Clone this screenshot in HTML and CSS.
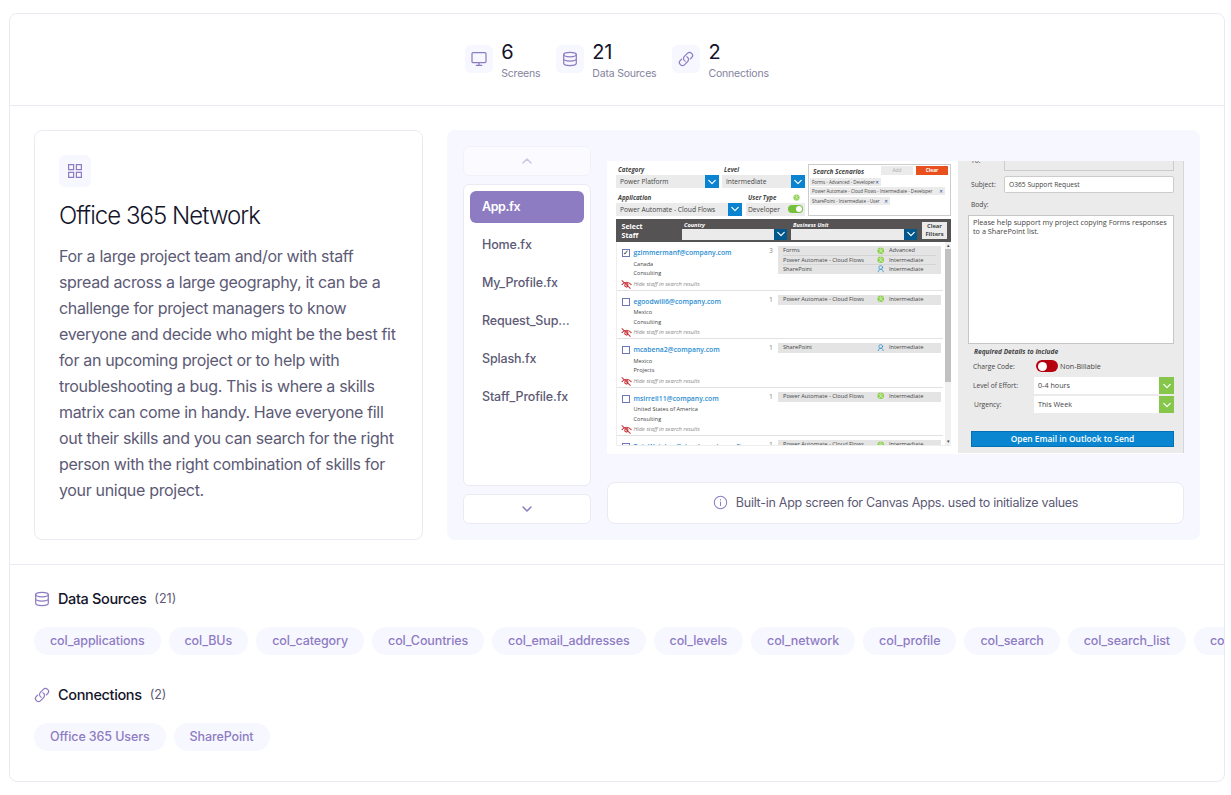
FILE: index.html
```
<!DOCTYPE html>
<html lang="en">
<head>
  <meta charset="UTF-8" />
  <meta name="viewport" content="width=device-width, initial-scale=1.0" />
  <title>Office 365 Network</title>
  <link rel="stylesheet" href="styles.css">
</head>
<body>
  <svg class="sprite" width="0" height="0">
    <symbol id="i-screen" viewBox="0 0 16 16"><rect x="1" y="1.6" width="14" height="10" rx="1.2"/><path d="M8 11.6v2.6M5.2 14.3h5.6"/></symbol>
    <symbol id="i-data" viewBox="0 0 16 16"><ellipse cx="8" cy="3.6" rx="6.3" ry="2.2"/><path d="M1.7 3.6v8.6c0 1.3 2.8 2.3 6.3 2.3s6.3-1 6.3-2.3V3.6M1.7 7.8c0 1.3 2.8 2.2 6.3 2.2s6.3-.9 6.3-2.2"/></symbol>
    <symbol id="i-link" viewBox="0 0 24 24"><path stroke-width="1.9" d="M13.19 8.688a4.5 4.5 0 0 1 1.242 7.244l-4.5 4.5a4.5 4.5 0 0 1-6.364-6.364l1.757-1.757m13.35-.622 1.757-1.757a4.5 4.5 0 0 0-6.364-6.364l-4.5 4.5a4.5 4.5 0 0 0 1.242 7.244"/></symbol>
    <symbol id="i-grid" viewBox="0 0 16 16"><path stroke-linejoin="miter" d="M1.6 1.6h5v5h-5zM9.4 1.6h5v5h-5zM1.6 9.4h5v5h-5zM9.4 9.4h5v5h-5z"/></symbol>
    <symbol id="i-down" viewBox="0 0 10 10"><path d="M1 3l4 4 4-4"/></symbol>
    <symbol id="i-up" viewBox="0 0 10 10"><path d="M1 7l4-4 4 4"/></symbol>
    <symbol id="i-info" viewBox="0 0 16 16"><circle cx="8" cy="8" r="6.6"/><path d="M8 7.4v3.8M8 4.7v.6"/></symbol>
    <symbol id="i-gear" viewBox="0 0 10 10"><circle cx="5" cy="5" r="4.4" fill="#8ccf4d" stroke="none"/><path d="M2.2 3.2l2.6 1.6M7.8 2.6L5.6 5.2M3 7.8l2-1.8M7.8 7.2L5.8 6.4M5 1v2" stroke="#dff2cf" stroke-width="1"/></symbol>
    <symbol id="i-user" viewBox="0 0 10 10"><circle cx="5" cy="3.3" r="2.5"/><path d="M1.6 9.4c0-2.3 1.5-3.6 3.4-3.6s3.4 1.3 3.4 3.6"/></symbol>
    <symbol id="i-hide" viewBox="0 0 12 10"><path d="M1 5.2C3.6 1.6 8.4 1.6 11.2 5.2M1 .8l9.2 8.4M4 5.4a2 2 0 0 0 3.6 1.4M4.6 4a2 2 0 0 1 3.1 1.4"/></symbol>
  </svg>

  <div class="card">
    <header class="stats">
      <div class="stat">
        <span class="stat-icon"><svg class="icon"><use href="#i-screen"/></svg></span>
        <div><div class="stat-num">6</div><div class="stat-label">Screens</div></div>
      </div>
      <div class="stat">
        <span class="stat-icon"><svg class="icon"><use href="#i-data"/></svg></span>
        <div><div class="stat-num">21</div><div class="stat-label">Data Sources</div></div>
      </div>
      <div class="stat">
        <span class="stat-icon"><svg class="icon"><use href="#i-link"/></svg></span>
        <div><div class="stat-num">2</div><div class="stat-label">Connections</div></div>
      </div>
    </header>

    <main class="overview">
      <section class="about">
        <span class="about-icon"><svg class="icon"><use href="#i-grid"/></svg></span>
        <h1>Office 365 Network</h1>
        <p>For a large project team and/or with staff spread across a large geography, it can be a challenge for project managers to know everyone and decide who might be the best fit for an upcoming project or to help with troubleshooting a bug. This is where a skills matrix can come in handy. Have everyone fill out their skills and you can search for the right person with the right combination of skills for your unique project.</p>
      </section>

      <section class="preview">
        <nav class="screens">
          <button class="arrow disabled"><svg><use href="#i-up"/></svg></button>
          <ul>
            <li class="active">App.fx</li>
            <li>Home.fx</li>
            <li>My_Profile.fx</li>
            <li>Request_Support.fx</li>
            <li>Splash.fx</li>
            <li>Staff_Profile.fx</li>
          </ul>
          <button class="arrow"><svg><use href="#i-down"/></svg></button>
        </nav>

        <div class="stage">
          <div class="shot">
            <div class="staff">
              <div class="filters">
                <div class="fields">
                  <div class="field-row">
                    <div class="field category"><label>Category</label><div class="select"><span>Power Platform</span><i><svg><use href="#i-down"/></svg></i></div></div>
                    <div class="field level"><label>Level</label><div class="select"><span>Intermediate</span><i><svg><use href="#i-down"/></svg></i></div></div>
                  </div>
                  <div class="field-row">
                    <div class="field application"><label>Application</label><div class="select"><span>Power Automate - Cloud Flows</span><i><svg><use href="#i-down"/></svg></i></div></div>
                    <div class="field usertype"><label>User Type <svg class="gear"><use href="#i-gear"/></svg></label><div class="select"><span>Developer</span><b class="toggle"></b></div></div>
                  </div>
                </div>
                <div class="scenarios">
                  <div class="scenarios-head"><strong>Search Scenarios</strong><span class="add">Add</span><span class="clear">Clear</span></div>
                  <div class="tag">Forms - Advanced - Developer <em>✕</em></div>
                  <div class="tag wide">Power Automate - Cloud Flows - Intermediate - Developer <em>✕</em></div>
                  <div class="tag mid">SharePoint - Intermediate - User <em>✕</em></div>
                </div>
              </div>

              <div class="bar">
                <div class="bar-title">Select<br>Staff</div>
                <div class="bar-field country"><label>Country</label><div><i><svg><use href="#i-down"/></svg></i></div></div>
                <div class="bar-field unit"><label>Business Unit</label><div><i><svg><use href="#i-down"/></svg></i></div></div>
                <div class="bar-clear">Clear<br>Filters</div>
              </div>

              <div class="results">
                <div class="people">
                  <div class="person">
                    <div class="check">✓</div>
                    <div class="who">
                      <div class="mail">gzimmermanf@company.com</div><div>Canada</div><div>Consulting</div>
                      <div class="hide"><svg><use href="#i-hide"/></svg>Hide staff in search results</div>
                    </div>
                    <div class="count">3</div>
                    <div class="skills">
                      <div class="skill"><span>Forms</span><svg><use href="#i-gear"/></svg><span>Advanced</span></div>
                      <div class="skill"><span>Power Automate - Cloud Flows</span><svg><use href="#i-gear"/></svg><span>Intermediate</span></div>
                      <div class="skill"><span>SharePoint</span><svg><use href="#i-user"/></svg><span>Intermediate</span></div>
                    </div>
                  </div>
                  <div class="person">
                    <div class="check"></div>
                    <div class="who">
                      <div class="mail">egoodwill6@company.com</div><div>Mexico</div><div>Consulting</div>
                      <div class="hide"><svg><use href="#i-hide"/></svg>Hide staff in search results</div>
                    </div>
                    <div class="count">1</div>
                    <div class="skills">
                      <div class="skill"><span>Power Automate - Cloud Flows</span><svg><use href="#i-gear"/></svg><span>Intermediate</span></div>
                    </div>
                  </div>
                  <div class="person">
                    <div class="check"></div>
                    <div class="who">
                      <div class="mail">mcabena2@company.com</div><div>Mexico</div><div>Projects</div>
                      <div class="hide"><svg><use href="#i-hide"/></svg>Hide staff in search results</div>
                    </div>
                    <div class="count">1</div>
                    <div class="skills">
                      <div class="skill"><span>SharePoint</span><svg><use href="#i-user"/></svg><span>Intermediate</span></div>
                    </div>
                  </div>
                  <div class="person">
                    <div class="check"></div>
                    <div class="who">
                      <div class="mail">msirrell11@company.com</div><div>United States of America</div><div>Consulting</div>
                      <div class="hide"><svg><use href="#i-hide"/></svg>Hide staff in search results</div>
                    </div>
                    <div class="count">1</div>
                    <div class="skills">
                      <div class="skill"><span>Power Automate - Cloud Flows</span><svg><use href="#i-gear"/></svg><span>Intermediate</span></div>
                    </div>
                  </div>
                  <div class="person">
                    <div class="check"></div>
                    <div class="who"><div class="mail">RainWatcher@cloud.onmicrosoft.com</div></div>
                    <div class="count">1</div>
                    <div class="skills">
                      <div class="skill"><span>Power Automate - Cloud Flows</span><svg><use href="#i-gear"/></svg><span>Intermediate</span></div>
                    </div>
                  </div>
                </div>
                <div class="scroll"><span>▴</span><div></div><span>▾</span></div>
              </div>
            </div>

            <div class="mailer">
              <div class="line to"><label>To:</label><div></div></div>
              <div class="line subject"><label>Subject:</label><div>O365 Support Request</div></div>
              <div class="body-label">Body:</div>
              <div class="body-text">Please help support my project copying Forms responses to a SharePoint list.</div>
              <div class="required">Required Details to include</div>
              <div class="opt charge"><label>Charge Code:</label><b></b><span>Non-Billable</span></div>
              <div class="opt"><label>Level of Effort:</label><div>0-4 hours</div><i><svg><use href="#i-down"/></svg></i></div>
              <div class="opt"><label class="urgency">Urgency:</label><div>This Week</div><i><svg><use href="#i-down"/></svg></i></div>
              <div class="send">Open Email in Outlook to Send</div>
            </div>
          </div>

          <div class="note"><svg class="icon"><use href="#i-info"/></svg>Built-in App screen for Canvas Apps. used to initialize values</div>
        </div>
      </section>
    </main>

    <footer class="lists">
      <h2><svg class="icon"><use href="#i-data"/></svg>Data Sources <span>(21)</span></h2>
      <div class="chips">
        <span>col_applications</span>
        <span>col_BUs</span>
        <span>col_category</span>
        <span>col_Countries</span>
        <span>col_email_addresses</span>
        <span>col_levels</span>
        <span>col_network</span>
        <span>col_profile</span>
        <span>col_search</span>
        <span>col_search_list</span>
        <span>col_skills</span>
      </div>
      <h2><svg class="icon"><use href="#i-link"/></svg>Connections <span>(2)</span></h2>
      <div class="chips">
        <span>Office 365 Users</span>
        <span>SharePoint</span>
      </div>
    </footer>
  </div>
</body>
</html>
```
FILE: styles.css
```
* {
  box-sizing: border-box;
}

body {
  margin: 0;
  padding: 13px 6px 13px 9px;
  font-family: Inter, "Liberation Sans", sans-serif;
  background: #fff;
  color: #14142b;
}

.sprite {
  position: absolute;
}

svg {
  display: block;
  flex: none;
  fill: none;
  stroke: currentColor;
  stroke-linecap: round;
  stroke-linejoin: round;
}

.icon {
  width: 16px;
  height: 16px;
  stroke-width: 1.25;
  color: #8e7cc3;
}

.card {
  height: 769px;
  border: 1px solid #ebeaf3;
  border-radius: 8px;
  overflow: hidden;
}

/* stats */
.stats {
  height: 92px;
  padding-bottom: 1px;
  display: flex;
  justify-content: center;
  align-items: center;
  gap: 16px;
  border-bottom: 1px solid #ebeaf3;
}

.stat {
  display: flex;
  align-items: center;
  gap: 8px;
}

.stat-icon {
  width: 28px;
  height: 28px;
  display: flex;
  align-items: center;
  justify-content: center;
  background: #f7f7ff;
  border-radius: 6px;
}

.stat-num {
  font-size: 20px;
  line-height: 28px;
  letter-spacing: -0.4px;
}

.stat-label {
  font-size: 10.5px;
  line-height: 15px;
  letter-spacing: -0.2px;
  color: #83839d;
}

/* about + preview */
.overview {
  height: 459px;
  padding: 24px;
  display: grid;
  grid-template-columns: 389px 1fr;
  gap: 24px;
  border-bottom: 1px solid #ebeaf3;
}

.about {
  padding: 24px;
  border: 1px solid #ebeaf3;
  border-radius: 8px;
}

.about-icon {
  width: 32px;
  height: 32px;
  display: flex;
  align-items: center;
  justify-content: center;
  background: #f7f7ff;
  border-radius: 6px;
}

.about h1 {
  margin: 13px 0 11px;
  font-size: 24px;
  line-height: 32px;
  font-weight: 350;
  letter-spacing: -0.97px;
}

.about p {
  margin: 0;
  font-size: 16px;
  line-height: 26px;
  letter-spacing: -0.33px;
  color: #5c5a75;
}

.preview {
  padding: 16px;
  display: grid;
  grid-template-columns: 128px 1fr;
  gap: 16px;
  background: #f7f7ff;
  border-radius: 8px;
}

.screens {
  display: flex;
  flex-direction: column;
  gap: 8px;
}

.arrow {
  height: 30px;
  padding: 0;
  display: flex;
  align-items: center;
  justify-content: center;
  background: #fff;
  border: 1px solid #ebeaf3;
  border-radius: 6px;
  color: #8e7cc3;
}

.arrow svg {
  width: 10px;
  height: 10px;
  stroke-width: 1.5;
}

.arrow.disabled {
  opacity: 0.4;
}

.screens ul {
  flex: 1;
  margin: 0;
  padding: 6px;
  list-style: none;
  background: #fff;
  border: 1px solid #ebeaf3;
  border-radius: 6px;
}

.screens li {
  height: 32px;
  margin-bottom: 6px;
  padding: 0 12px;
  overflow: hidden;
  text-overflow: ellipsis;
  white-space: nowrap;
  border-radius: 6px;
  font-size: 12.5px;
  line-height: 32px;
  font-weight: 500;
  letter-spacing: -0.16px;
  color: #5c5a75;
}

.screens li.active {
  background: #8e7cc3;
  color: #fff;
  font-weight: 600;
  letter-spacing: -0.4px;
}

.stage {
  padding-top: 15px;
  display: flex;
  flex-direction: column;
  justify-content: space-between;
}

.note {
  height: 42px;
  padding-bottom: 1px;
  display: flex;
  align-items: center;
  justify-content: center;
  gap: 8px;
  background: #fff;
  border: 1px solid #ebeaf3;
  border-radius: 8px;
  font-size: 12.5px;
  letter-spacing: -0.26px;
  color: #5c5a75;
}

.note .icon {
  width: 15px;
  height: 15px;
  stroke-width: 1.1;
}

/* app screen */
.shot {
  height: 293px;
  display: grid;
  grid-template-columns: 351px 1fr;
  overflow: hidden;
  background: #fff;
  font-family: "Open Sans", "Noto Sans", sans-serif;
  font-size: 6.7px;
  color: #444;
}

.shot i svg {
  width: 8px;
  height: 8px;
  stroke-width: 1.5;
  color: #fff;
}

.staff {
  padding: 3px 7px 0 9px;
}

.filters {
  height: 55px;
  display: grid;
  grid-template-columns: 189px 143px;
  gap: 3px;
}

.field-row {
  display: flex;
  justify-content: space-between;
  height: 27.5px;
}

.field label {
  display: flex;
  justify-content: space-between;
  height: 11px;
  padding-left: 2px;
  line-height: 11px;
  font-size: 6.2px;
  font-weight: 700;
  font-style: italic;
}

.category { width: 103px; }
.level { width: 83px; }
.application { width: 126px; }
.usertype { width: 59px; }

.gear {
  width: 7px;
  height: 7px;
  margin: 2px 5px 0 0;
}

.select {
  height: 13px;
  display: flex;
  justify-content: space-between;
  background: #ebebeb;
  line-height: 13px;
  padding-left: 4px;
  white-space: nowrap;
}

.usertype .select {
  padding-left: 2px;
}

.select i {
  width: 14px;
  display: flex;
  align-items: center;
  justify-content: center;
  background: #0a84d0;
}

.toggle {
  position: relative;
  width: 15px;
  height: 8px;
  margin: 2.5px 2px;
  border-radius: 4px;
  background: #74bf3c;
}

.toggle::after {
  content: "";
  position: absolute;
  right: 1px;
  top: 1px;
  width: 6px;
  height: 6px;
  border-radius: 50%;
  background: #fff;
}

.scenarios {
  height: 52px;
  border: 1px solid #ccc;
  padding: 1px 2px 0 1px;
}

.scenarios-head {
  display: flex;
  height: 10px;
  margin-bottom: 2px;
  line-height: 10px;
  gap: 3px;
}

.scenarios-head strong {
  flex: 1;
  padding-left: 3px;
  line-height: 11px;
  font-size: 6.4px;
  font-style: italic;
}

.scenarios-head span {
  width: 32px;
  height: 9px;
  line-height: 9px;
  text-align: center;
  font-size: 4.8px;
}

.add { background: #ebebeb; color: #aaa; }
.clear { background: #e8501e; color: #fff; font-weight: 700; }

.tag {
  width: 71px;
  height: 8px;
  margin-bottom: 1.4px;
  display: flex;
  justify-content: space-between;
  padding: 0 2px;
  background: #ebebeb;
  font-size: 4.5px;
  line-height: 8px;
  white-space: nowrap;
}

.tag.wide { width: 135px; }
.tag.mid { width: 80px; }

.tag em {
  font-style: normal;
  color: #2f4f9f;
}

.bar {
  height: 23px;
  display: flex;
  background: #555354;
  color: #fff;
  font-weight: 700;
}

.bar-title {
  width: 66px;
  padding: 3px 0 0 5.5px;
  font-size: 7.1px;
  line-height: 9px;
}

.bar-field label {
  display: block;
  height: 10px;
  padding: 1px 0 0 2px;
  line-height: 10px;
  font-size: 5.6px;
  font-style: italic;
}

.bar-field div {
  height: 10.5px;
  display: flex;
  justify-content: flex-end;
  background: #ebebeb;
}

.bar-field i {
  width: 13px;
  display: flex;
  align-items: center;
  justify-content: center;
  background: #00588c;
}

.country { width: 105px; margin-right: 4px; }
.unit { width: 126px; }

.bar-clear {
  width: 25px;
  height: 17px;
  margin: 3px 0 0 5px;
  background: #ebebeb;
  color: #444;
  font-size: 5.8px;
  line-height: 8px;
  text-align: center;
}

.results {
  height: 204px;
  display: grid;
  grid-template-columns: 1fr 6px;
  overflow: hidden;
  border-left: 1px solid #eee;
  border-bottom: 1px solid #eee;
}

.people {
  height: 203px;
  overflow: hidden;
  padding-right: 2px;
}

.person {
  height: 48.5px;
  padding-top: 4px;
  display: grid;
  grid-template-columns: 16.5px 130.5px 14px 163px;
  border-bottom: 1px solid #e2e2e2;
  font-size: 5.6px;
}

.check {
  width: 8px;
  height: 8px;
  margin: 3px 0 0 5px;
  border: 1px solid #6f76b5;
  font-size: 7px;
  line-height: 6px;
  color: #222;
}

.who {
  line-height: 9.5px;
  white-space: nowrap;
}

.mail {
  height: 13.5px;
  line-height: 13px;
  font-size: 6.8px;
  font-weight: 600;
  color: #2a8dd2;
}

.hide {
  display: flex;
  align-items: center;
  gap: 2px;
  margin: 1px 0 0 -13px;
  font-size: 5.7px;
  font-style: italic;
  color: #888;
}

.hide svg {
  width: 11px;
  height: 9px;
  stroke-width: 1.2;
  color: #c8383f;
}

.count {
  padding-left: 5px;
  line-height: 10px;
  font-size: 6.8px;
  color: #888;
}

.skills {
  align-self: start;
  padding: 0 5px 1.5px;
  background: #e4e4e4;
}

.skill {
  height: 8.8px;
  display: grid;
  grid-template-columns: 94px 12px 1fr;
  align-items: center;
  white-space: nowrap;
  line-height: 8.8px;
  font-size: 5.7px;
}

.skill + .skill {
  border-top: 1px solid #d4d4d4;
}

.skill svg {
  width: 7.5px;
  height: 7.5px;
  color: #2b94d6;
}

.scroll {
  display: flex;
  flex-direction: column;
  background: #f1f1f1;
  font-size: 5px;
  line-height: 7px;
  text-align: center;
}

.scroll div {
  height: 133px;
  margin-bottom: auto;
  background: #c1c1c1;
}

.mailer {
  height: 292px;
  padding: 0 9px 0 10px;
  background: #ebebeb;
  border-right: 1px solid #d5d5dc;
}

.line {
  display: flex;
  padding-left: 3px;
}

.line label {
  width: 33px;
}

.line div {
  flex: 1;
  border: 1px solid #ccc;
}

.to {
  height: 10px;
  line-height: 0;
}

.to div {
  border-top: 0;
}

.subject {
  height: 17px;
  margin-top: 5px;
  line-height: 17px;
}

.subject div {
  padding-left: 4px;
  line-height: 15px;
  background: #fff;
  border-radius: 2px;
}

.body-label {
  height: 22px;
  padding-left: 3px;
  line-height: 24px;
}

.body-text {
  height: 129px;
  padding: 2px 4px;
  background: #fff;
  border: 1px solid #c6c6c6;
  font-size: 7.3px;
  line-height: 8.8px;
}

.required {
  height: 16px;
  padding-left: 6px;
  line-height: 16px;
  font-size: 6.6px;
  font-weight: 700;
  font-style: italic;
}

.opt {
  height: 17px;
  margin-bottom: 2px;
  display: flex;
  line-height: 17px;
  font-size: 7.2px;
}

.opt label {
  width: 66px;
  padding-left: 5px;
  font-size: 6.7px;
}

.opt label.urgency {
  padding-left: 6px;
}

.opt div {
  flex: 1;
  padding-left: 4px;
  background: #fff;
}

.opt i {
  width: 15px;
  display: flex;
  align-items: center;
  justify-content: center;
  background: #86c64a;
}

.opt.charge {
  height: 14px;
  margin-bottom: 3px;
  line-height: 13px;
}

.charge b {
  width: 22px;
  height: 12px;
  margin: 0 2px 0 2px;
  padding: 1.5px;
  border-radius: 6px;
  background: #b5000f;
}

.charge b::after {
  content: "";
  display: block;
  width: 9px;
  height: 9px;
  border-radius: 50%;
  background: #fff;
}

.send {
  height: 16px;
  margin: 18px 0 0 3px;
  background: #0a86d0;
  border: 1px solid #0570b4;
  color: #fff;
  font-size: 8.4px;
  font-weight: 600;
  line-height: 14px;
  text-align: center;
}

/* chips */
.lists {
  padding: 24px 0 0 24px;
}

.lists h2 {
  height: 20px;
  margin: 0 0 18px;
  padding-bottom: 1px;
  display: flex;
  align-items: center;
  font-size: 14.5px;
  font-weight: 500;
  letter-spacing: -0.36px;
}

.lists h2 .icon {
  margin-right: 8px;
}

.lists h2 span {
  margin-left: 8px;
  font-size: 12.5px;
  font-weight: 400;
  letter-spacing: 0;
  color: #5c5a75;
}

.chips {
  display: flex;
  gap: 8px;
  margin-bottom: 30px;
  overflow: hidden;
}

.chips span {
  flex: none;
  height: 28px;
  padding: 0 16px;
  border-radius: 14px;
  background: #f7f7ff;
  font-size: 12.5px;
  line-height: 28px;
  font-weight: 500;
  letter-spacing: -0.11px;
  color: #8e7cc3;
}
```
